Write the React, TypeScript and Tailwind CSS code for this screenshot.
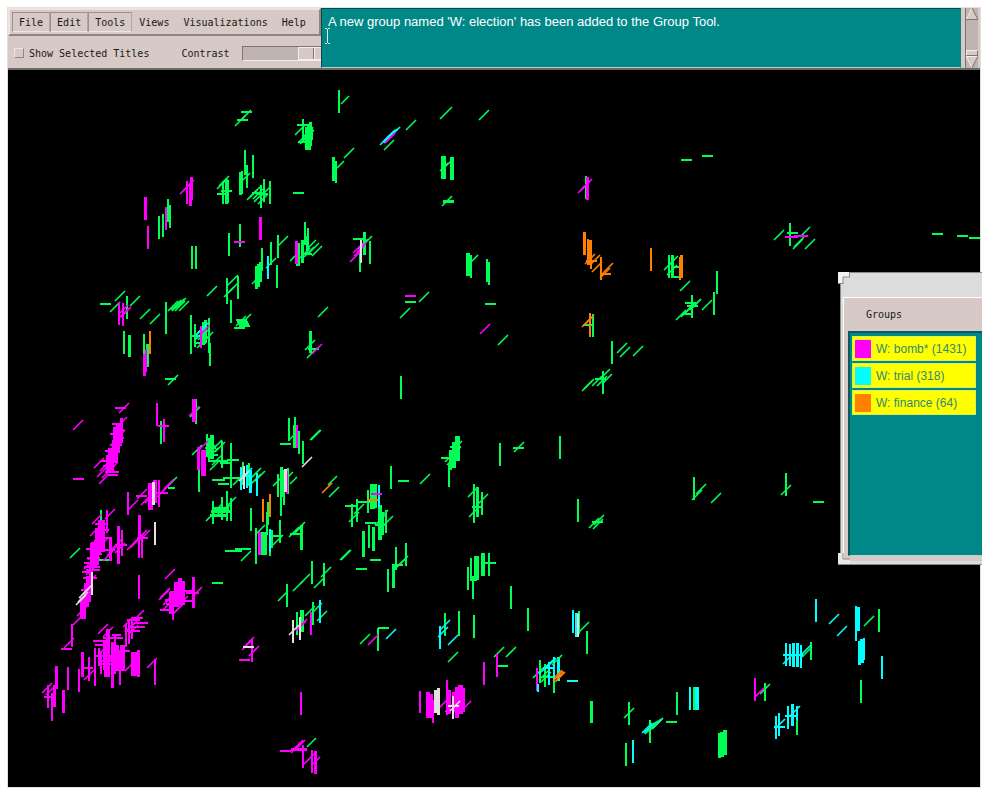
type MarkKind = 'v' | 'h' | 'd'
type MarkSet = { color: string; kind: MarkKind; points: string }

const GREEN = '#00ff55'
const MAGENTA = '#ff00ff'
const CYAN = '#00ffff'
const ORANGE = '#ff8000'
const WHITE = '#e4e0e0'

// Each mark is "x,y[,length[,thickness]]".
// v: drops from its top, h: runs from its left end, d: rises from its lower left end.
const marks: MarkSet[] = [
  {
    color: GREEN,
    kind: 'v',
    points: `303,119 306,127 308,124,24,3 310,122,24,3 309,128,22,4 312,128,12 245,150,25 253,155 247,165 240,172,23,3 242,171 226,179,25,3 223,181 228,180
      264,179 270,181 261,185 168,199 170,205 159,216 163,214 192,246 196,246 229,233 240,224 262,248 260,262,20,3 258,264,23,3 256,266,23,3
      271,242 278,235 277,265 305,222 308,228 307,236,18 302,240 298,243,23,4 303,240 127,296 166,302 166,311 227,278,26 238,276 231,300
      191,315 191,331 195,324 209,318 210,343 209,330 203,322,23,3 205,320,23,3 124,331 129,335,22,3 144,334 147,344,23,3 310,331,22,3
      339,90 333,157,24,3 336,161,22 443,156,23,5 452,157,23,4 364,232,23,3 370,241 360,249 468,253,23,4 471,255 487,259 489,262 401,376
      586,176 669,255 672,255,23,3 717,271 714,292 692,295 593,314 612,341 603,371 790,223
      161,421 196,399,25 101,510,12 199,469 207,434 212,435,24,4 209,438 222,441,27 231,443,45 243,462 249,463 227,491,30 213,501 222,497 231,498
      268,502 267,512 251,508 256,528,36 280,520 262,532,23,5 265,532,23,4 270,532,24 272,530,18 301,525,25,3
      289,418 295,417,31 294,425 299,431 303,441 281,467,30,3 281,493 278,474 284,470,35 288,468,26 391,466
      368,490 372,484,25,5 375,484,24,3 352,504 357,499 380,505,35,4 386,510 383,512 363,531,26,3 369,525 373,527,24,3
      406,543 396,547 388,569 393,566,22,3 312,561 324,563 287,584 297,612 302,610,22,4 313,602 378,628
      457,436,25,5 454,442,26,4 450,450,20,3 449,464 500,443 560,436 474,484,39 477,487,30,3 482,492 578,499
      468,567 471,558 473,576 476,556,24,5 483,553,23,4 489,553 511,586 528,608 474,615 459,611,25 445,613 579,611 587,631
      540,660 545,664 554,670 591,701,22,3 629,702 677,692 650,720 626,743 879,609 861,680 786,473 694,477
      719,733,25,3 722,732,25,4 725,730,25,4 765,683,18 797,712 694,687 811,642,18`,
  },
  {
    color: GREEN,
    kind: 'h',
    points: `241,112 237,120 297,125 298,142 221,191 217,194 252,193 257,194 293,193 301,254 100,304 237,322 238,324 236,320 239,326 234,328 192,336 195,343 308,349
      165,379 443,201,11,3 353,239,13 405,302 485,304 681,160 702,156 672,267,8 672,277 685,303 687,306 682,314 583,325 595,379
      787,233 932,234 957,236 969,238 168,488,7 98,560 212,583 208,461,20 227,460,12 220,463 212,480,13 218,484 223,478,17
      211,511,20,3 213,508,16,3 210,515,16,3 271,536 225,551,17 235,549,16 290,534 280,444 398,481 345,506 358,502,13 365,523 375,525
      370,560 356,569 392,565 378,628 441,458 450,447 513,448 472,507 592,522 485,563 471,580,6 497,666 542,677 666,722 813,502 207,455 205,448`,
  },
  {
    color: GREEN,
    kind: 'd',
    points: `235,126 241,120 295,135 298,143 300,144 302,141 304,140 303,137 243,180,7 217,189 219,186 247,200 250,197 253,199 258,204 260,197 254,202
      252,284 266,268 278,246 290,261 312,256 309,253 304,257 300,258 306,250 115,301 207,296 110,312 130,306 140,319 150,324
      168,311 171,310 172,311 174,309 176,308 179,311 175,311 228,285 224,297 229,292 241,324 236,326 197,348 200,345 203,342 198,340 196,335
      305,350 307,358 168,385 341,104,8 440,119,12 479,120 406,130 384,150 344,158 337,168,7 440,171,8 444,168,8 442,206 358,249 362,246
      471,262,7 419,302 400,318 498,345 318,317 664,270 667,275 668,266 680,291 702,310 676,320 681,317 685,313 690,310 683,315 691,309
      617,353 620,357 633,356 582,391 584,389 592,386 597,386 602,384 600,379 774,240 800,237 793,249 805,249 794,247 190,417
      167,487 70,558 192,455 210,470 212,465 215,452 205,455 208,458 212,450 233,485 251,484 255,481 251,478 206,521 226,507 215,517 212,514 220,515
      273,545 255,535 241,561 289,537 293,535 295,532 310,440 311,440 289,440,8 273,486 290,484,7 283,482 328,485,9 329,497 420,484
      349,522 354,514 375,525 383,526 378,520 340,560 341,560 395,569 398,566 314,588 321,577 293,591 300,584 278,601 305,616 312,613 317,621
      360,644 447,465 450,458 445,462 452,451 514,452 468,497 478,504 469,517 589,528 593,529 594,525 448,662 494,657 506,657 579,632
      533,678 541,682 624,718 864,626 781,495 692,500 696,494 711,503 802,657 760,694 307,747,9`,
  },
  {
    color: MAGENTA,
    kind: 'v',
    points: `166,207 260,217,23,3 296,241,23,3 119,302,23,2 123,303 144,354,22,3 146,349 145,197,23,3 148,226 187,181 191,177,23,3 190,183,23,3
      587,177,23,3 157,403 164,419 194,399,23,4 121,418,25,3 118,425,28,4 114,427,24,3 115,440,23,6 111,448,25,6 108,455,18,4
      150,483,27,5 155,480,23,4 159,480,27 128,492 139,515,24,3 139,533,25 142,535 107,510 101,520,32,7 98,528,26,6 93,543,25,6 96,540,25,5 110,537,24,3
      118,526,38,3 122,530,26 90,565 86,583,24,5 83,597,22,6 88,576,26,5 72,624 139,575,24 180,578,27,4 176,582,25,5 183,581,24,4 173,596,24 171,592,22,4 193,577,31,3
      129,621 126,624 132,619,20 108,629,48,4 106,650,27,4 95,648,38 101,651 112,642,46,3 115,636,38 120,650,35 122,645,26,5 133,652,24,4 136,652,24,5 138,650,27,3
      117,645,26,3 99,648,18 104,640,30,3
      82,652,25,3 89,657,24 79,669 68,667 56,666,23,3 63,690,23,3 48,685 54,685,22,3 52,693,28 155,659,26 252,639 301,692 303,745 312,750 315,751,23,3
      198,447,23,3 203,450,26,5 259,532,23,3 297,425 287,471 311,612 497,654 484,662 537,668
      420,691,22 428,692,26,4 431,694,24,3 433,700 447,680,35 449,690,24,4 453,692,20,3 457,687,31,4 460,685,29,5 463,688,24,4 755,678`,
  },
  {
    color: MAGENTA,
    kind: 'h',
    points: `234,242 405,296 73,479 115,408 158,426 110,434,12 113,430 110,445,12 105,451,14 101,461,14 103,466,12 105,472,14 107,475 113,438 107,456 112,424,9
      136,496 157,493 137,538 115,545,12 104,550 86,549 84,567,16 84,563,14 82,572 87,558,13 95,530,14 96,538,14 91,543,13 95,524,12 90,554,12 86,570,14 83,578,14 81,590,12
      61,649 182,591 186,593,13 182,601 160,610 165,600,15 170,597,15 166,604,16 170,592,14 93,641 95,645 103,638,15 112,635,9 112,638 127,620,13 132,618 135,623,13 133,627,12 127,631,13
      119,651 84,668,9 44,697,12 96,656,16 107,658,14 100,661 99,664,16 112,654,12 280,751 291,749,16,3 239,660`,
  },
  {
    color: MAGENTA,
    kind: 'd',
    points: `119,318 121,317 118,315 312,354 180,194 184,190 350,262 354,256 353,253 357,252 480,334 578,193 580,191 582,189
      73,430 119,413 189,416 94,468 97,477 99,484 100,471 105,466 108,460 112,452 115,440 117,427 102,478 108,472 110,446 128,510 137,499 141,505 145,503 160,494 164,489 157,497
      127,550 130,548 133,544 137,540 140,540 92,524 105,519 103,561 107,556 112,549 115,553 84,569 88,560 98,548 165,579 73,625 64,648 77,616 86,585
      90,536 93,552 86,575 80,606 83,598 88,574
      159,600 160,598 163,610 192,597 172,615 175,612 168,605 165,603 170,610 163,605 174,600 178,606 98,634 103,637 134,620 125,632 128,635 130,628 123,627 125,671 84,680 42,693 46,695
      108,660 112,665 98,655 103,668 147,668 242,650 244,647 249,656 291,753 293,750 295,750 304,764 313,764,7 198,451 296,631 297,629 368,645 439,708 464,708,7 754,698 445,712`,
  },
  {
    color: CYAN,
    kind: 'v',
    points: `268,256 241,467 247,465 250,470,23,3 257,473 270,529 379,485 320,600 440,626 573,610 576,613,24,3 549,662 554,657 558,657,24,3 538,684,8
      633,740 856,606,35 858,607,24,3 859,641,24,3 862,639,24,4 864,638,22,2 882,656 786,643 790,644,22 793,643,24,3 797,643,24,3 801,645
      816,599 690,687 697,687,23,4 776,716 779,713 788,706 792,704,22,3 797,706,14`,
  },
  { color: CYAN, kind: 'h', points: '240,476 543,668 567,681 783,655,20 774,727 785,716' },
  {
    color: CYAN,
    kind: 'd',
    points: `196,335 198,333 196,339 380,145 383,142 385,140 387,139 390,137 384,143 242,478 386,639 440,630 438,637 448,645 539,674 543,670 546,668
      642,733 644,733 646,732 648,731 650,730 652,729 653,728 829,624 837,636 775,729 790,716 783,664 801,655`,
  },
  {
    color: ORANGE,
    kind: 'v',
    points: '150,331 584,232,23,3 588,239,26 591,241,28 590,240,25,3 601,257 651,248 681,255,23,3 680,257 590,313,24 263,499 270,494',
  },
  { color: ORANGE, kind: 'h', points: '586,261 600,274 367,500' },
  { color: ORANGE, kind: 'd', points: '585,264 592,272 590,265 600,278 603,273 582,327 584,325 322,493 553,681 555,682 557,679,7 555,677,7' },
  { color: GREEN, kind: 'd', points: '645,734 651,729 648,731 552,665 539,680' },
  { color: MAGENTA, kind: 'v', points: '201,326,22' },
  { color: MAGENTA, kind: 'h', points: '371,494 785,237,13 794,236,14' },
  { color: MAGENTA, kind: 'd', points: '385,143 386,142,9 200,335' },
  { color: WHITE, kind: 'v', points: '361,240 153,482,23,3 155,522 92,572 244,466 285,469,23,3 293,620 300,617 578,614 435,690,23,3 438,688,27,3 453,696' },
  { color: WHITE, kind: 'h', points: '243,647 448,706' },
  { color: WHITE, kind: 'd', points: '76,605 78,602 79,598 82,595 239,481 302,467 289,635 450,711' },
]

function markPath(kind: MarkKind, x: number, y: number, length: number) {
  if (kind === 'v') return `M${x} ${y}v${length}`
  if (kind === 'h') return `M${x} ${y}h${length}`
  return `M${x} ${y}l${length} ${-length}`
}

const defaultLength: Record<MarkKind, number> = { v: 23, h: 11, d: 10 }
const defaultThickness: Record<MarkKind, number> = { v: 2, h: 2, d: 1.6 }

function StarField() {
  return (
    <svg viewBox="8 70 972 717" className="block h-auto w-full bg-black" role="img" aria-label="Document galaxy">
      {marks.map((set, i) => (
        <g key={i} stroke={set.color} fill="none" shapeRendering={set.kind === 'd' ? 'auto' : 'crispEdges'}>
          {set.points
            .trim()
            .split(/\s+/)
            .map((point, j) => {
              const [x, y, length = defaultLength[set.kind], thickness = defaultThickness[set.kind]] = point
                .split(',')
                .map(Number)
              return <path key={j} d={markPath(set.kind, x, y, length)} strokeWidth={thickness} />
            })}
        </g>
      ))}
    </svg>
  )
}

const menus = [
  { label: 'File', raised: true },
  { label: 'Edit', raised: true },
  { label: 'Tools', raised: true },
  { label: 'Views', raised: false },
  { label: 'Visualizations', raised: false },
  { label: 'Help', raised: false },
]

const groups = [
  { name: 'W: bomb* (1431)', swatch: 'bg-[#ff00ff]' },
  { name: 'W: trial (318)', swatch: 'bg-[#00ffff]' },
  { name: 'W: finance (64)', swatch: 'bg-[#ff8000]' },
]

function Controls() {
  return (
    <div className="w-[313px] shrink-0 overflow-hidden font-['DejaVu_Sans_Mono',monospace] text-[10px] text-[#1c1818]">
      <nav className="flex h-7 items-center border-2 border-t-[#ece4e2] border-r-[#8e8481] border-b-[#8e8481] border-l-[#ece4e2] pl-0.5">
        {menus.map((menu) => (
          <button
            key={menu.label}
            className={
              menu.raised
                ? 'h-5 border border-t-[#9a908e] border-r-[#b0a6a3] border-b-[#ece4e2] border-l-[#9a908e] px-1.5'
                : 'h-5 px-[7px]'
            }
          >
            {menu.label}
          </button>
        ))}
      </nav>
      <div className="flex h-[34px] items-center pl-1.5">
        <label className="flex items-center gap-[5px] whitespace-nowrap">
          <input
            type="checkbox"
            className="size-2.5 appearance-none border border-t-[#ece4e2] border-r-[#8e8481] border-b-[#8e8481] border-l-[#ece4e2]"
          />
          Show Selected Titles
        </label>
        <label htmlFor="contrast" className="ml-8">
          Contrast
        </label>
        <input
          id="contrast"
          type="range"
          defaultValue={86}
          className="ml-3 h-[15px] w-24 shrink-0 appearance-none border border-t-[#7d7472] border-r-white border-b-[#f4eeec] border-l-[#7d7472] bg-[#c0b4b0] [&::-webkit-slider-thumb]:h-[13px] [&::-webkit-slider-thumb]:w-[30px] [&::-webkit-slider-thumb]:appearance-none [&::-webkit-slider-thumb]:border [&::-webkit-slider-thumb]:border-[#f4eeec] [&::-webkit-slider-thumb]:bg-[linear-gradient(90deg,#d6c9c6_14px,#7d7472_14px,#7d7472_15px,#f4eeec_15px,#f4eeec_16px,#d6c9c6_16px)]"
        />
      </div>
    </div>
  )
}

function StatusLog() {
  return (
    <div className="relative flex min-w-0 flex-1">
      <textarea
        aria-label="Messages"
        readOnly
        className="block h-full min-w-0 flex-1 resize-none overflow-hidden border border-t-[#0b4a4a] border-r-[#008888] border-b-[#b9d0ce] border-l-[#0b4a4a] bg-[#008888] px-1.5 py-[5px] font-['Liberation_Sans',sans-serif] text-[13px] leading-4 text-white outline-none"
        defaultValue={"A new group named 'W: election' has been added to the Group Tool."}
      />
      <svg viewBox="0 0 5 16" className="absolute top-5 left-1 h-4 w-[5px]" aria-hidden="true">
        <path d="M0 .5h2M3 .5h2M0 15.5h2M3 15.5h2M2.5 1v14" stroke="#e6f2f2" fill="none" />
      </svg>
    </div>
  )
}

function LogScrollbar() {
  return (
    <div className="flex w-[19px] shrink-0 bg-[#d6c9c6] pr-[2px] pl-1">
      <div className="flex flex-1 flex-col border-l border-[#7d7472] bg-[#c0b4b0]">
        <button aria-label="Scroll up" className="h-3">
          <svg viewBox="0 0 12 12" className="block size-3">
            <path d="M6 0L12 12H0z" fill="#d6c9c6" />
            <path d="M6 0L0 12" stroke="#f4eeec" />
            <path d="M6 0L12 11.5H0" stroke="#7d7472" fill="none" />
          </svg>
        </button>
        <div className="mt-auto h-1.5 border border-t-[#f4eeec] border-r-[#7d7472] border-b-[#7d7472] border-l-[#f4eeec] bg-[#d6c9c6]" />
        <button aria-label="Scroll down" className="h-3">
          <svg viewBox="0 0 12 12" className="block size-3">
            <path d="M0 0H12L6 12z" fill="#d6c9c6" />
            <path d="M6 12L0 .5H12" stroke="#f4eeec" fill="none" />
            <path d="M12 0L6 12" stroke="#7d7472" />
          </svg>
        </button>
      </div>
    </div>
  )
}

function GroupTool() {
  return (
    <section className="absolute top-[202px] -right-0.5 w-36">
      <div className="ml-0.5 border-t border-b border-l border-t-[#8a8a8a] border-b-[#8a8a8a] border-l-[#8a8a8a] bg-[#dcdcdc] pb-[3px] pl-[2px]">
        <div className="h-6" />
        <div className="border-t border-l border-white bg-[#d6c9c6] pb-[5px] pl-1">
          <h2 className="flex h-[33px] items-center pl-[18px] font-['DejaVu_Sans_Mono',monospace] text-[10px] text-[#1c1818]">Groups</h2>
          <ul className="flex h-[225px] flex-col gap-0.5 border-t-2 border-b border-l-2 border-t-[#0b5a5a] border-b-[#b9d0ce] border-l-[#0b5a5a] bg-[#008888] py-[3px] pr-1.5 pl-0.5">
            {groups.map((group) => (
              <li key={group.name}>
                <button className="flex h-[25px] w-full items-center gap-[5px] border border-[#d8f060] bg-[#ffff00] pl-0.5 font-['Liberation_Sans',sans-serif] text-[12px] whitespace-nowrap text-[#2f8a70]">
                  <span className={`h-[18px] w-4 shrink-0 ${group.swatch}`} />
                  {group.name}
                </button>
              </li>
            ))}
          </ul>
        </div>
      </div>
      <svg viewBox="0 0 12 12" className="absolute top-0 left-0 size-3" aria-hidden="true">
        <path d="M0 0h12v5H5v7H0z" fill="#f2f2f2" />
        <path d="M12 5H5v7M0 11.5h5M11.5 0v5" stroke="#8a8a8a" fill="none" />
      </svg>
      <svg viewBox="0 0 12 12" className="absolute bottom-0 left-0 size-3" aria-hidden="true">
        <path d="M0 0h5v6h7v6H0z" fill="#e8e8e8" />
        <path d="M5 0v6h7M0 11.5h12" stroke="#8a8a8a" fill="none" />
      </svg>
    </section>
  )
}

export default function App() {
  return (
    <main className="bg-white pt-[7px] pr-1.5 pb-2 pl-[7px]">
      <div className="border border-[#e4dedc] bg-[#d6c9c6]">
        <header className="flex h-[60px]">
          <Controls />
          <StatusLog />
          <LogScrollbar />
        </header>
        <div className="relative border-t-2 border-[#6e6866]">
          <StarField />
          <GroupTool />
        </div>
      </div>
    </main>
  )
}
